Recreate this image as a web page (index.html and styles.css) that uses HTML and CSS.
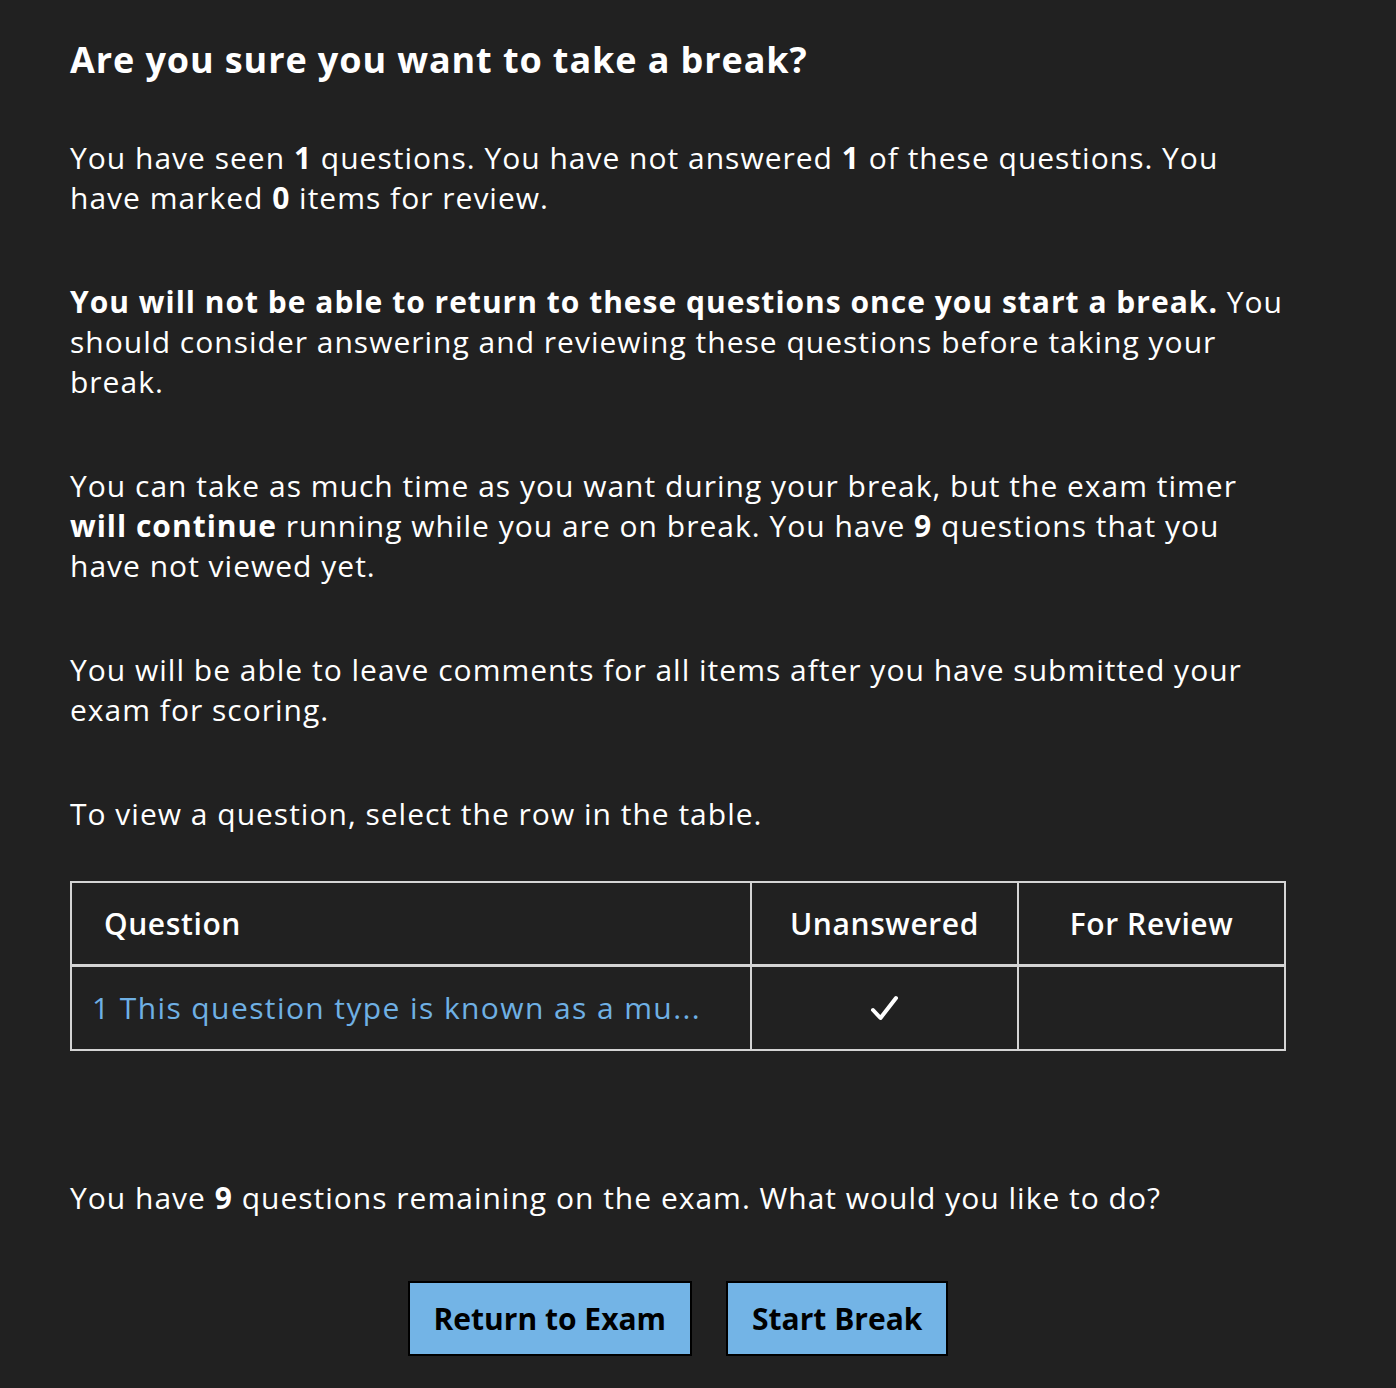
FILE: index.html
```html
<!DOCTYPE html>
<html lang="en">
<head>
  <meta charset="UTF-8">
  <meta name="viewport" content="width=device-width, initial-scale=1.0">
  <title>Take a break</title>
  <link rel="stylesheet" href="styles.css">
</head>
<body>
  <!-- Break confirmation -->
  <main class="break-page">
    <h1>Are you sure you want to take a break?</h1>

    <p>You have seen <b>1</b> questions. You have not answered <b>1</b> of these questions. You have marked <b>0</b> items for review.</p>

    <p><b>You will not be able to return to these questions once you start a break.</b> You should consider answering and reviewing these questions before taking your break.</p>

    <p>You can take as much time as you want during your break, but the exam timer <b>will continue</b> running while you are on break. You have <b>9</b> questions that you have not viewed yet.</p>

    <p>You will be able to leave comments for all items after you have submitted your exam for scoring.</p>

    <p>To view a question, select the row in the table.</p>

    <!-- Question table -->
    <table class="review-table">
      <thead>
        <tr>
          <th class="col-question">Question</th>
          <th class="col-flag">Unanswered</th>
          <th class="col-flag">For Review</th>
        </tr>
      </thead>
      <tbody>
        <tr>
          <td class="col-question"><a href="#">1 This question type is known as a mu...</a></td>
          <td class="col-flag">
            <svg class="check" width="34" height="34" viewBox="0 0 34 34">
              <path d="M5 19 L12.5 27 L28 7" fill="none" stroke="#fff" stroke-width="4" stroke-linecap="round" stroke-linejoin="round"/>
            </svg>
          </td>
          <td class="col-flag"></td>
        </tr>
      </tbody>
    </table>

    <p class="remaining">You have <b>9</b> questions remaining on the exam. What would you like to do?</p>

    <div class="actions">
      <button class="btn">Return to Exam</button>
      <button class="btn">Start Break</button>
    </div>
  </main>
</body>
</html>
```

FILE: styles.css
```css
body {
  margin: 0;
  background-color: #212121;
  color: #fff;
  font-family: "Segoe UI", "Open Sans", sans-serif;
}

.break-page {
  width: 1216px;
  padding: 34px 0 30px 70px;
}

h1 {
  margin: 0 0 52px;
  font-size: 36px;
  font-weight: bold;
  line-height: 52px;
  letter-spacing: 0.9px;
}

p {
  margin: 0 0 64px;
  font-size: 30px;
  line-height: 40px;
  letter-spacing: 1px;
}

p b {
  font-weight: bold;
}

/* Table */
.review-table {
  width: 1216px;
  table-layout: fixed;
  border-collapse: collapse;
  margin-top: -17px;
  margin-bottom: 127px;
  font-size: 30px;
  letter-spacing: 1.4px;
}

.review-table th,
.review-table td {
  box-sizing: border-box;
  border: 2px solid #d4d4d4;
  height: 85px;
  padding: 0;
}

.review-table thead th {
  height: 83px;
  border-bottom-width: 3px;
  font-weight: 600;
  letter-spacing: 0.6px;
}

.review-table .col-question {
  text-align: left;
}

.review-table th.col-question {
  padding-left: 32px;
}

.review-table td.col-question {
  padding-left: 20px;
}

.review-table .col-flag {
  width: 267px;
  text-align: center;
}

.review-table a {
  color: #6fb0e4;
  text-decoration: none;
}

.check {
  display: block;
  margin: 0 auto;
}

.remaining {
  margin-bottom: 63px;
}

.actions {
  display: flex;
  justify-content: center;
  gap: 34px;
}

.btn {
  background-color: #73b4e6;
  border: 2px solid #000;
  color: #000;
  font-family: inherit;
  font-size: 30px;
  font-weight: bold;
  padding: 0 24px;
  height: 75px;
  cursor: pointer;
}
```
